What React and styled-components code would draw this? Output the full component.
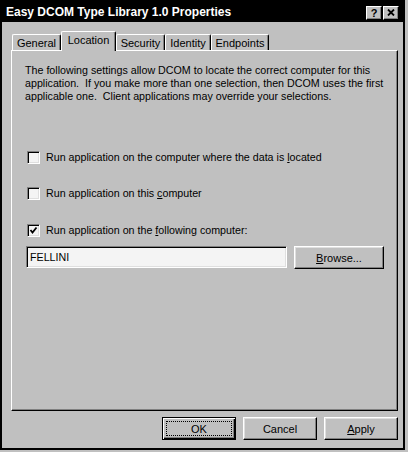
import React from 'react'
import styled, { createGlobalStyle } from 'styled-components'

const GlobalStyle = createGlobalStyle`
  body {
    margin: 0;
    background: #c0c0c0;
    font-family: "Liberation Sans", Arial, sans-serif;
    font-size: 11px;
    color: #000;
  }
`

const tabs = [
  { label: 'General', width: 49 },
  { label: 'Location', width: 55, active: true },
  { label: 'Security', width: 49 },
  { label: 'Identity', width: 46 },
  { label: 'Endpoints', width: 58 },
]

const CloseGlyph = () => (
  <svg width="8" height="7" viewBox="0 0 8 7">
    <path d="M1 0.5 L7 6.5 M7 0.5 L1 6.5" stroke="#000" strokeWidth="1.8" fill="none" />
  </svg>
)

const CheckGlyph = () => (
  <svg width="9" height="9" viewBox="0 0 9 9">
    <path d="M1.5 4 L3.5 6.5 L7.5 1.5" stroke="#000" strokeWidth="1.8" fill="none" />
  </svg>
)

const CheckOption = ({ checked, top, children }) => (
  <CheckRow $top={top}>
    <CheckBox>{checked && <CheckGlyph />}</CheckBox>
    <CheckLabel>{children}</CheckLabel>
  </CheckRow>
)

const App = () => {
  return (
    <>
      <GlobalStyle />
      <Window>
        <TitleBar>
          <TitleText>Easy DCOM Type Library 1.0 Properties</TitleText>
          <CaptionButtons>
            <CaptionButton>?</CaptionButton>
            <CaptionButton><CloseGlyph /></CaptionButton>
          </CaptionButtons>
        </TitleBar>
        <DialogBody>
          <TabRow>
            {tabs.map((t) => (
              <Tab key={t.label} $active={t.active} $w={t.width}>{t.label}</Tab>
            ))}
          </TabRow>
          <Panel>
            <Intro>
              The following settings allow DCOM to locate the correct computer for this
              <br />
              application.{'\u00a0'} If you make more than one selection, then DCOM uses the first
              <br />
              applicable one.{'\u00a0'} Client applications may override your selections.
            </Intro>
            <CheckOption top={48}>
              Run application on the computer where the data is <Mnemonic>l</Mnemonic>ocated
            </CheckOption>
            <CheckOption top={23}>
              Run application on this <Mnemonic>c</Mnemonic>omputer
            </CheckOption>
            <CheckOption top={24} checked>
              Run application on the <Mnemonic>f</Mnemonic>ollowing computer:
            </CheckOption>
            <InputRow>
              <TextBox>FELLINI</TextBox>
              <Button $w={90}><Mnemonic>B</Mnemonic>rowse...</Button>
            </InputRow>
          </Panel>
          <Footer>
            <DefaultButton>
              <FocusRing>OK</FocusRing>
            </DefaultButton>
            <Button $w={74}>Cancel</Button>
            <Button $w={74}><Mnemonic>A</Mnemonic>pply</Button>
          </Footer>
        </DialogBody>
      </Window>
    </>
  )
}

const Window = styled.div`
  width: 405px;
  height: 450px;
  box-sizing: border-box;
  border: 2px solid #000;
  background: #c0c0c0;
  display: flex;
  flex-direction: column;
`

const TitleBar = styled.div`
  height: 20px;
  background: #000;
  display: flex;
  align-items: center;
  padding: 0 4px 0 4px;
`

const TitleText = styled.div`
  flex: 1;
  color: #fff;
  font-weight: bold;
  font-size: 12px;
  white-space: nowrap;
`

const CaptionButtons = styled.div`
  display: flex;
  gap: 1px;
  margin-top: 1px;
`

const CaptionButton = styled.div`
  width: 16px;
  height: 14px;
  box-sizing: border-box;
  background: #c0c0c0;
  border-top: 1px solid #fff;
  border-left: 1px solid #fff;
  border-right: 1px solid #000;
  border-bottom: 1px solid #000;
  box-shadow: inset -1px -1px #808080;
  display: flex;
  align-items: center;
  justify-content: center;
  font-weight: bold;
  font-size: 11px;
  line-height: 12px;
`

const DialogBody = styled.div`
  flex: 1;
  display: flex;
  flex-direction: column;
  padding: 9px 5px 0 9px;
`

const TabRow = styled.div`
  display: flex;
  align-items: flex-end;
  height: 19px;
  padding-left: 1px;
`

const Tab = styled.div`
  width: ${(p) => p.$w}px;
  height: ${(p) => (p.$active ? 20 : 16)}px;
  margin-bottom: ${(p) => (p.$active ? -1 : 0)}px;
  padding-bottom: ${(p) => (p.$active ? 3 : 0)}px;
  box-sizing: border-box;
  background: #c0c0c0;
  border-top: 1px solid #fff;
  border-left: 1px solid #fff;
  border-right: 1px solid #000;
  border-radius: 2px 2px 0 0;
  box-shadow: inset -1px 0 #808080;
  display: flex;
  align-items: center;
  justify-content: center;
  white-space: nowrap;
  position: relative;
  z-index: ${(p) => (p.$active ? 1 : 0)};
`

const Panel = styled.div`
  height: 361px;
  box-sizing: border-box;
  border-top: 1px solid #fff;
  border-left: 1px solid #fff;
  border-right: 1px solid #000;
  border-bottom: 1px solid #000;
  box-shadow: inset -1px -1px #808080;
  padding: 13px 10px 0 13px;
  display: flex;
  flex-direction: column;
  font-size: 10.7px;
`

const Intro = styled.p`
  margin: 0;
  line-height: 13px;
  white-space: nowrap;
`

const CheckRow = styled.div`
  display: flex;
  align-items: center;
  gap: 6px;
  height: 13px;
  margin-left: 2px;
  margin-top: ${(p) => p.$top}px;
`

const CheckBox = styled.div`
  width: 13px;
  height: 13px;
  box-sizing: border-box;
  background: #f4f4f4;
  border-top: 1px solid #808080;
  border-left: 1px solid #808080;
  border-right: 1px solid #fff;
  border-bottom: 1px solid #fff;
  box-shadow: inset 1px 1px #000, inset -1px -1px #dfdfdf;
  display: flex;
  align-items: center;
  justify-content: center;
`

const CheckLabel = styled.span`
  line-height: 13px;
  white-space: nowrap;
`

const Mnemonic = styled.u`
  text-decoration: underline;
  text-underline-offset: 1px;
`

const InputRow = styled.div`
  display: flex;
  gap: 7px;
  margin-top: 9px;
  margin-left: 1px;
`

const TextBox = styled.div`
  width: 261px;
  height: 22px;
  box-sizing: border-box;
  background: #f4f4f4;
  border-top: 1px solid #808080;
  border-left: 1px solid #808080;
  border-right: 1px solid #fff;
  border-bottom: 1px solid #fff;
  box-shadow: inset 1px 1px #000, inset -1px -1px #dfdfdf;
  padding: 0 3px;
  display: flex;
  align-items: center;
`

const Button = styled.button`
  width: ${(p) => p.$w}px;
  height: 23px;
  box-sizing: border-box;
  padding: 0;
  background: #c0c0c0;
  border-top: 1px solid #fff;
  border-left: 1px solid #fff;
  border-right: 1px solid #000;
  border-bottom: 1px solid #000;
  box-shadow: inset -1px -1px #808080, inset 1px 1px #dfdfdf;
  font: inherit;
  font-size: 11px;
  color: #000;
`

const DefaultButton = styled.button`
  width: 74px;
  height: 23px;
  box-sizing: border-box;
  padding: 3px;
  background: #c0c0c0;
  border: 1px solid #000;
  box-shadow: inset 1px 1px #fff, inset -1px -1px #000, inset -2px -2px #808080;
  font: inherit;
  color: #000;
  display: flex;
`

const FocusRing = styled.span`
  flex: 1;
  border: 1px dotted #000;
  display: flex;
  align-items: center;
  justify-content: center;
`

const Footer = styled.div`
  display: flex;
  justify-content: flex-end;
  gap: 7px;
  margin-top: 6px;
`

export default App
